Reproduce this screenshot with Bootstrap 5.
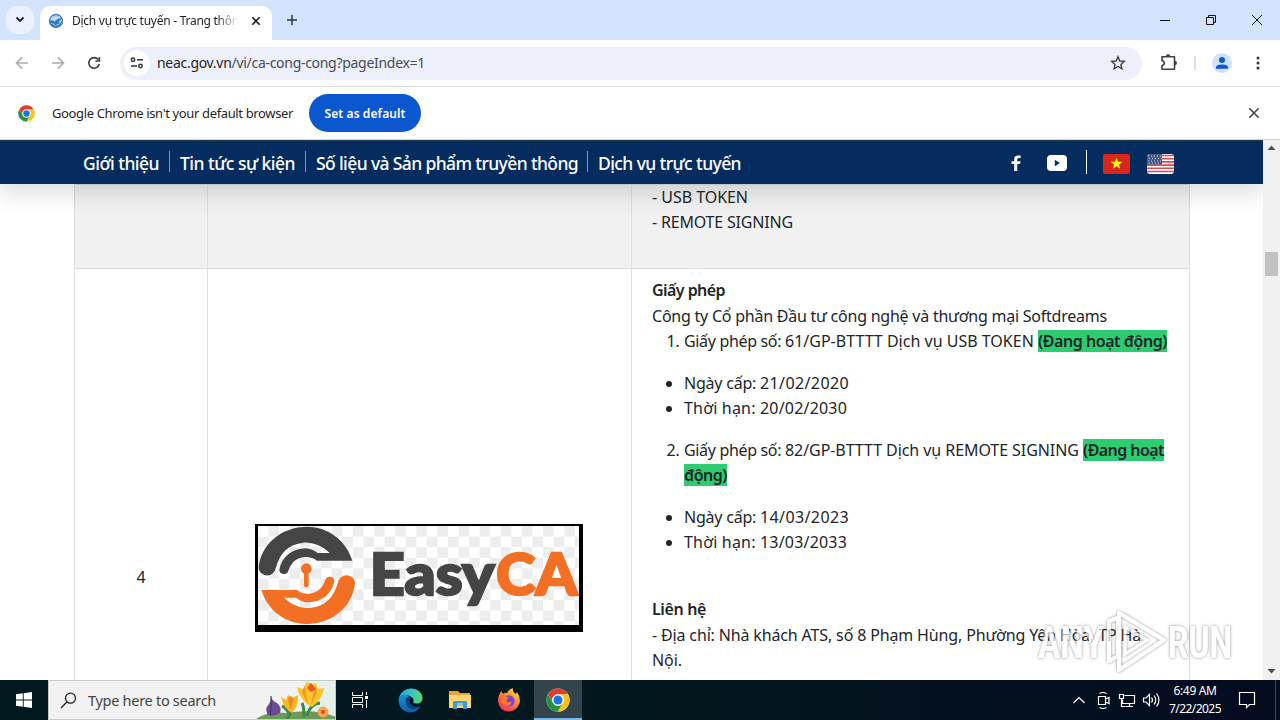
<!DOCTYPE html>
<html lang="vi">
<head>
  <meta charset="UTF-8" />
  <title>Dịch vụ trực tuyến</title>
  <link href="https://cdn.jsdelivr.net/npm/bootstrap@5.3.3/dist/css/bootstrap.min.css" rel="stylesheet">
  <style>
    body { width:1280px; height:720px; overflow:hidden; font-family:"Noto Sans","Open Sans",sans-serif; font-size:13px; color:#1f1f1f }
    svg { display:block; flex:none }
    [data-w] { white-space:nowrap }
    .tabstrip { height:40px; background:#d3e3fd; padding-left:6px }
    .tab-search { width:28px; height:28px; border-radius:10px; background:#e9f0fe; margin-top:-1px }
    .browser-tab { width:232px; height:34px; background:#fff; border-radius:10px 10px 0 0; margin:6px 0 0 6px; padding:0 8px 5px 8px }
    .tab-title { width:168px; font-size:12px; -webkit-mask-image:linear-gradient(90deg,#000 86%,transparent 99%) }
    .new-tab { margin-left:15px }
    .toolbar { height:46px }
    .address { width:1022px; height:33px; border-radius:17px; background:#edf0fa; margin-left:17px; padding:0 16px 0 4px }
    .site-info { width:26px; height:26px; border-radius:50%; background:#fff }
    .address-text { font-size:14px; margin-left:7px; padding-bottom:1px }
    .address-path { color:#474b52 }
    .infobar { height:54px; border-top:1px solid #dfe1e5; border-bottom:1px solid #c9d3e0; padding-left:18px }
    .infobar-text { margin-left:17px; padding-top:1px }
    .btn-default-browser { width:112px; height:38px; border-radius:19px; background:#0b57d0; color:#fff; font-size:12px; font-weight:600; margin-left:16px; padding:1px 0 0 }
    .btn-default-browser:hover { background:#0842a0; color:#fff }
    .page { height:540px }
    .site-nav { height:44px; background:#052c5e; border-top:1px solid #263a52; color:#fff; z-index:2; box-shadow:0 8px 24px rgba(0,0,0,.15); padding-left:83px }
    .site-nav a { color:#fff; text-decoration:none; font-size:17.5px; font-weight:500; line-height:22px }
    .nav-sep { width:1px; height:21px; background:#8297b2; margin:-3px 10px 0 }
    .site-nav .nav-sep:last-of-type { margin-left:9px }
    .ca-table { width:1116px; margin-left:74px; table-layout:fixed; font-size:16px; line-height:25.5px; color:#212529; border-color:#dee2e6 }
    .ca-table td { border:1px solid #dcdfe2; vertical-align:middle }
    .ca-table .info-cell { vertical-align:top; padding:9px 8px 0 20px }
    .row-prev { height:84px }
    .row-prev td { background:#f1f1f1 }
    .ca-table .row-prev .info-cell { padding-top:0; line-height:25px }
    .row-ca { height:618px }
    .ca-table ol, .ca-table ul { margin-bottom:16px; padding-left:32px }
    .active-mark { background:#2dcc70; font-weight:600 }
    .heading-bold { font-weight:600 }
    .ca-logo { margin-left:46px }
    .scroll-track { width:17px; background:#f1f1f1 }
    .scroll-thumb { width:13px; height:24px; background:#c1c1c1; margin-top:101px }
    .watermark { left:1030px; top:600px; z-index:3 }
    .taskbar { height:40px; background:linear-gradient(90deg,#021920,#03161e 55%,#04101f 80%,#030c20); color:#fff }
    .start-btn { width:48px }
    .search-box { width:288px; height:40px; background:#f2f2f2; border:1px solid #c8c8c8; padding-left:11px; font-size:14.5px; color:#444 }
    .search-text { margin-left:11px; padding-top:1px }
    .task-view { width:48px; height:40px; margin-right:2px }
    .task-app { width:49px; height:40px }
    .task-app-active { width:48px; margin-left:1px; background:#34444b; border-bottom:2px solid #76b9ed; padding-top:2px }
    .clock { width:58px; font-size:12px; line-height:18px }
  </style>
</head>
<body class="d-flex flex-column m-0">

<svg width="0" height="0" class="position-absolute">
  <symbol id="chromeLogo" viewBox="0 0 48 48">
    <circle cx="24" cy="24" r="23" fill="#fff"/>
    <path d="M4 12.5A23 23 0 0 1 44 12.5H24A11.5 11.5 0 0 0 14 29.7z" fill="#e33b2e"/>
    <path d="M4 12.5A23 23 0 0 0 24 47L34 29.7A11.5 11.5 0 0 1 14 29.7z" fill="#229342"/>
    <path d="M44 12.5A23 23 0 0 1 24 47L34 29.7A11.5 11.5 0 0 0 24 12.5z" fill="#fbc116"/>
    <circle cx="24" cy="24" r="11.5" fill="#fff"/>
    <circle cx="24" cy="24" r="9" fill="#1a73e8"/>
  </symbol>
</svg>

<!-- tabs -->
<div class="tabstrip d-flex align-items-center">
  <div class="tab-search d-flex align-items-center justify-content-center">
    <svg width="10" height="7" viewBox="0 0 10 7"><path d="M1.5 1.5L5 5l3.500-3.500" fill="none" stroke="#1f1f1f" stroke-width="1.800"/></svg>
  </div>
  <div class="browser-tab d-flex align-items-center">
    <svg width="16" height="16" viewBox="0 0 16 16">
      <circle cx="8" cy="8" r="6.500" fill="#c9dff1" stroke="#3b80bd" stroke-width="1.300"/>
      <path d="M1.500 8Q4 6.500 6.500 8.500Q9 5.500 14 4.500Q13 7.500 10 9.500Q13 9.500 14.500 8Q13 13 8 14.500Q2.500 14 1.500 8z" fill="#2f7bb8"/>
      <path d="M4 5.500Q8 2 12 3.500M3 10.500q4 0 5 3M8 12q3.500-.5 5-2.500" fill="none" stroke="#9cc6e4" stroke-width=".9"/>
    </svg>
    <div class="tab-title overflow-hidden ms-2"><span data-w="174">Dịch vụ trực tuyến - Trang thông</span></div>
    <svg class="ms-auto" width="16" height="16" viewBox="0 0 16 16"><path d="M4.300 4.300l7.400 7.400M11.700 4.300l-7.400 7.400" stroke="#1f1f1f" stroke-width="1.600"/></svg>
  </div>
  <svg class="new-tab" width="10" height="10" viewBox="0 0 10 10"><path d="M5 0v10M0 5h10" stroke="#303540" stroke-width="1.500"/></svg>
  <div class="ms-auto d-flex align-items-center">
    <svg width="120" height="40" viewBox="0 0 120 40" fill="none" stroke="#111">
      <path d="M0 20.500h10M46.500 17.500h7v7h-7zM48.500 17v-1.500h7v7h-1.500M92 15l10 10M102 15l-10 10"/>
    </svg>
  </div>
</div>

<!-- address bar -->
<div class="toolbar d-flex align-items-center">
  <svg width="103" height="46" viewBox="0 0 103 46" fill="none" stroke-width="1.600">
    <path d="M28 23H17M22 17.500L16.500 23l5.500 5.500M52 23h11M58 17.500l5.500 5.500-5.500 5.500" stroke="#a9abaf"/>
    <path d="M98.200 19.500A5.300 5.300 0 1 0 99.300 24M99.400 17v4h-4" stroke="#3c4043"/>
  </svg>
  <div class="address d-flex align-items-center">
    <div class="site-info d-flex align-items-center justify-content-center">
      <svg width="14" height="12" viewBox="0 0 14 12" fill="none" stroke="#303236" stroke-width="1.500"><circle cx="3" cy="2.800" r="1.700"/><circle cx="10.500" cy="9" r="1.700"/><path d="M7 2.800h6M1 9h6"/></svg>
    </div>
    <div class="address-text"><span data-w="268">neac.gov.vn<span class="address-path">/vi/ca-cong-cong?pageIndex=1</span></span></div>
    <svg class="ms-auto" width="16" height="16" viewBox="0 0 16 16"><path d="M8 1.800l1.800 4.200 4.500.4-3.400 3 1 4.500L8 11.500l-3.900 2.400 1-4.500-3.400-3 4.500-.4z" fill="none" stroke="#3c4043" stroke-width="1.400"/></svg>
  </div>
  <svg width="138" height="46" viewBox="1142 0 138 46">
    <path d="M1162 16.800h12.500v12.500h-12.500v-3.800q2.300-.3 2.300-2.400t-2.300-2.400z" fill="none" stroke="#3c4043" stroke-width="1.600" stroke-linejoin="round"/>
    <path d="M1165.800 16.500q0-2.300 2.300-2.300t2.300 2.300zM1174.500 20.800q2.500 0 2.500 2.300t-2.500 2.300z" fill="#3c4043"/>
    <path d="M1195 16v14" stroke="#c5d3ee" stroke-width="1.500"/>
    <circle cx="1222" cy="23" r="10" fill="#cfe0fc"/>
    <circle cx="1222" cy="20" r="3" fill="#0b57d0"/>
    <path d="M1216 28.800v-1.300q0-3 6-3t6 3v1.300z" fill="#0b57d0"/>
    <g fill="#303236"><circle cx="1258" cy="18" r="1.500"/><circle cx="1258" cy="23" r="1.500"/><circle cx="1258" cy="28" r="1.500"/></g>
  </svg>
</div>

<!-- default browser bar -->
<div class="infobar d-flex align-items-center">
  <svg width="17" height="17"><use href="#chromeLogo"/></svg>
  <div class="infobar-text"><span data-w="241">Google Chrome isn't your default browser</span></div>
  <button class="btn btn-default-browser"><span data-w="81">Set as default</span></button>
  <svg class="ms-auto me-3" width="20" height="20" viewBox="0 0 20 20"><path d="M5.300 5.300l9.400 9.400M14.700 5.300l-9.400 9.400" stroke="#444746" stroke-width="1.600"/></svg>
</div>

<div class="page d-flex">
  <div class="flex-grow-1 overflow-hidden bg-white">
    <nav class="site-nav position-relative d-flex align-items-center">
      <a href="#"><span data-w="76">Giới thiệu</span></a><div class="nav-sep"></div>
      <a href="#"><span data-w="115">Tin tức sự kiện</span></a><div class="nav-sep"></div>
      <a href="#"><span data-w="262">Số liệu và Sản phẩm truyền thông</span></a><div class="nav-sep"></div>
      <a href="#"><span data-w="143">Dịch vụ trực tuyến</span></a>
      <svg class="ms-auto" width="263" height="43" viewBox="1000 141 263 43">
        <path d="M1014.200 171v-7h-2.700v-2.800h2.700v-2.200q0-3.600 3.700-3.600h2.800v2.700h-1.800q-1.700 0-1.700 1.500v1.600h3.400l-.5 2.800h-2.900v7z" fill="#fff"/>
        <rect x="1047" y="155" width="20" height="16" rx="4" fill="#fff"/><path d="M1054.800 159.700l5 3.300-5 3.300z" fill="#052c5e"/>
        <path d="M1086.500 150v24" stroke="#fff"/>
        <rect x="1103" y="154" width="27" height="20" rx="2" fill="#da251d"/>
        <path d="M1116.500 157.500l1.500 4.300h4.500l-3.600 2.700 1.300 4.300-3.700-2.600-3.700 2.600 1.300-4.300-3.600-2.700h4.500z" fill="#ffff00"/>
        <clipPath id="usClip"><rect x="1147" y="154" width="27" height="20" rx="3"/></clipPath>
        <g clip-path="url(#usClip)"><rect x="1147" y="154" width="27" height="20" fill="#fff"/>
          <path d="M1147 155.500h27M1147 158.700h27M1147 161.900h27M1147 165.100h27M1147 168.300h27M1147 171.500h27" stroke="#d94a55" stroke-width="1.600"/>
          <rect x="1147" y="154" width="15" height="10.500" fill="#4a5a86"/>
          <path d="M1148 156h13M1149 158.500h13M1148 161h13M1149 163h12" stroke="#c0c9dd" stroke-dasharray="1 2"/></g>
      </svg>
    </nav>

    <table class="ca-table">
      <colgroup><col style="width:133px"><col style="width:424px"><col></colgroup>
      <tr class="row-prev">
        <td></td><td></td>
        <td class="info-cell"><span data-w="96">- USB TOKEN</span><br><span data-w="141">- REMOTE SIGNING</span></td>
      </tr>
      <tr class="row-ca">
        <td class="text-center">4</td>
        <td>
          <svg class="ca-logo" width="328" height="108" viewBox="30 24 984 324">
            <defs>
              <pattern id="checks" x="70" y="30" width="63.400" height="63.400" patternUnits="userSpaceOnUse">
                <path d="M0 0h31.700v31.700H0zM31.700 31.700h31.700v31.700H31.700z" fill="#ededed"/>
              </pattern>
              <g id="swirl">
                <path d="M41 158C45 85 110 32 187 32C250 32 305 75 322 134H216Q200 122 180 123C152 125 137 142 130 165A14 14 0 0 1 103 161C110 122 142 98 180 97Q200 97 218 111H254C230 88 200 78 175 80C130 85 105 110 92 157A26 26 0 0 1 41 158z"/>
              </g>
            </defs>
            <rect x="30" y="24" width="984" height="324"/>
            <rect x="39" y="30" width="963" height="297" fill="#fff"/>
            <rect x="39" y="30" width="963" height="297" fill="url(#checks)"/>
            <use href="#swirl" fill="#454545"/>
            <use href="#swirl" fill="#f26f24" transform="rotate(180 185.500 178)"/>
            <path d="M184 158v49" stroke="#f26f24" stroke-width="14" stroke-linecap="round"/>
            <circle cx="184" cy="158" r="16" fill="#f26f24"/>
            <g font-family="Lato, sans-serif" font-weight="900" font-size="172" stroke-width="7">
              <text x="374" y="236" textLength="374" lengthAdjust="spacingAndGlyphs" fill="#454545" stroke="#454545">Easy</text>
              <text x="753" y="236" textLength="244" lengthAdjust="spacingAndGlyphs" fill="#f26f24" stroke="#f26f24">CA</text>
            </g>
          </svg>
        </td>
        <td class="info-cell">
          <div class="heading-bold"><span data-w="73">Giấy phép</span></div>
          <div><span data-w="455">Công ty Cổ phần Đầu tư công nghệ và thương mại Softdreams</span></div>
          <ol><li><span data-w="101">Giấy phép số:&nbsp;</span><span data-w="253">61/GP-BTTTT Dịch vụ USB TOKEN&nbsp;</span><span class="active-mark" data-w="129">(Đang hoạt động)</span></li></ol>
          <ul>
            <li><span data-w="76">Ngày cấp:&nbsp;</span><span data-w="89">21/02/2020</span></li>
            <li><span data-w="163">Thời hạn: 20/02/2030</span></li>
          </ul>
          <ol start="2"><li><span data-w="101">Giấy phép số:&nbsp;</span><span data-w="298">82/GP-BTTTT Dịch vụ REMOTE SIGNING&nbsp;</span><span class="active-mark" data-w="81">(Đang hoạt</span><br><span class="active-mark" data-w="43">động)</span></li></ol>
          <ul>
            <li><span data-w="76">Ngày cấp:&nbsp;</span><span data-w="89">14/03/2023</span></li>
            <li><span data-w="163">Thời hạn: 13/03/2033</span></li>
          </ul>
          <br>
          <div class="heading-bold"><span data-w="54">Liên hệ</span></div>
          <div><span data-w="489">- Địa chỉ: Nhà khách ATS, số 8 Phạm Hùng, Phường Yên Hòa, TP Hà</span><br><span data-w="30">Nội.</span><br>- Điện thoại:</div>
        </td>
      </tr>
    </table>
  </div>
  <div class="scroll-track d-flex flex-column align-items-center">
    <svg width="9" height="11" viewBox="0 0 9 11"><path d="M0.500 10L4.500 5.500 8.500 10z" fill="#505050"/></svg>
    <div class="scroll-thumb"></div>
    <svg class="mt-auto mb-1" width="9" height="9" viewBox="0 0 9 9"><path d="M0.500 2L4.500 6.500 8.500 2z" fill="#505050"/></svg>
  </div>
</div>

<!-- taskbar -->
<div class="taskbar d-flex align-items-center">
  <div class="start-btn d-flex justify-content-center">
    <svg width="16" height="16" viewBox="0 0 16 16"><path d="M0 2.300L6.800 1.300V7.500H0zM7.700 1.200L16 0v7.500H7.700zM0 8.400h6.800v6.300L0 13.700zM7.700 8.400H16V16l-8.300-1.200z" fill="#fff"/></svg>
  </div>
  <div class="search-box d-flex align-items-center">
    <svg width="17" height="17" viewBox="0 0 17 17"><path d="M1 16l5.800-6" stroke="#222" stroke-width="1.300"/><circle cx="10.500" cy="6.200" r="5" fill="none" stroke="#222" stroke-width="1.300"/></svg>
    <div class="search-text"><span data-w="128">Type here to search</span></div>
    <svg class="ms-auto" width="79" height="38" viewBox="256 681 79 38">
      <path d="M303 681h32v38h-32z" fill="#e6f0ea"/>
      <path d="M256 719q12-8 30-6q28-5 50 4v2z" fill="#6c9a58"/>
      <path d="M287 719q8-12 2-14M304 717q0-10-2-14M307 716q3-12 13-13M290 716q-3-8-8-10" fill="none" stroke="#3d8a44" stroke-width="3"/>
      <path d="M271 696q0 4 6 7q5 4 3 10q-7 4-12 2q-4-6 1-11q2-3 2-8z" fill="#6a4a91"/>
      <path d="M271 696q1 9-1 19" fill="none" stroke="#463067"/>
      <path d="M281 697l5 3 2-5 4 3 6-3q1 11-6 18q-8-4-11-16z" fill="#f9b821"/>
      <path d="M288 698l2 13 4-12-3-3z" fill="#ee8a20"/>
      <path d="M297 687l6 2 4-7 5 2 4-1 2 6 6-1q-2 12-12 19q-12-6-15-20z" fill="#fcc42c"/>
      <path d="M305 686l3 19-6-13zM315 685l2 7-6 13z" fill="#f39a1e"/>
      <path d="M307 688l4-5 5 6-5 3z" fill="#e65b1d"/>
      <circle cx="323" cy="712" r="5.500" fill="#f8a44b"/><circle cx="323" cy="712" r="2" fill="#ce4b20"/>
    </svg>
  </div>
  <div class="task-view d-flex align-items-center justify-content-center">
    <svg width="18" height="16" viewBox="0 0 18 16" fill="none" stroke="#fff"><path d="M1.500 0v3.500h10V0M1.500 16v-3.500h10V16M1.500 5.500h10v5h-10zM15.500 0v3M15.500 8v8"/><path d="M14 4h3v3h-3z" fill="#fff" stroke="none"/></svg>
  </div>
  <div class="task-app d-flex align-items-center justify-content-center">
    <svg width="25" height="25" viewBox="0 0 24 24">
      <defs>
        <linearGradient id="edgeTop"><stop stop-color="#2aa8e0"/><stop offset=".6" stop-color="#35c8bd"/><stop offset="1" stop-color="#68d65b"/></linearGradient>
        <linearGradient id="edgeLow" x2="0" y2="1"><stop stop-color="#1795d8"/><stop offset="1" stop-color="#125ba5"/></linearGradient>
      </defs>
      <path d="M0.500 11C2 4 7 .5 12.500.5C20 .5 24 6 23.500 10.500C23 15 17 16 14.500 14Q16 11 13.500 9C8 5 2 7 .5 11z" fill="url(#edgeTop)"/>
      <path d="M.5 11C3 6 8 6 11 8Q7 9 7.500 14Q9 21 18 19.500L21.500 17.500Q18 23.500 12 23.500Q1 23 .5 11z" fill="url(#edgeLow)"/>
      <path d="M11 8Q7 10 7.800 15Q9.500 21 17 20Q21 19 21.500 17.500Q16 19 13 16Q10 13 12 9z" fill="#123f85"/>
    </svg>
  </div>
  <div class="task-app d-flex align-items-center justify-content-center">
    <svg width="22" height="20" viewBox="0 0 22 20">
      <path d="M0 1h9l2 2h10v15H0z" fill="#e8a33b"/><path d="M0 5h22v13H0z" fill="#ffd86b"/>
      <path d="M4 19v-7q0-1 1-1h12q1 0 1 1v7h-4v-3H8v3z" fill="#3f9bd8"/><path d="M8 13h6v3H8z" fill="#8cc7ea"/>
    </svg>
  </div>
  <div class="task-app d-flex align-items-center justify-content-center">
    <svg width="24" height="24" viewBox="0 0 24 24">
      <defs><linearGradient id="fox" x1=".9" y1="0" x2=".2" y2="1"><stop stop-color="#fff04a"/><stop offset=".45" stop-color="#ff8a28"/><stop offset="1" stop-color="#f6285b"/></linearGradient></defs>
      <path d="M1 13Q1 7 4.500 3l1.500 3Q8 4 10 5Q12 1 16 0Q15 4 19 6L20 4Q24 10 22.500 15Q20 23 12 23.500Q2 23 1 13z" fill="url(#fox)"/>
      <circle cx="12" cy="13" r="5.700" fill="#7a42d8"/><path d="M4 9q5-2 8 1-4 1-2 4 3 1 5-1-1 5-6 5-5-1-5-9z" fill="#ff7a2a"/>
    </svg>
  </div>
  <div class="task-app task-app-active d-flex align-items-center justify-content-center">
    <svg width="24" height="24"><use href="#chromeLogo"/></svg>
  </div>
  <svg class="ms-auto" width="98" height="40" viewBox="1068 680 98 40" fill="none" stroke="#fff" stroke-width="1.200">
    <path d="M1073.500 703l5.500-5.500 5.500 5.500"/>
    <path d="M1098.500 696.500h7v8h-7zM1105.500 699l3.500-1.500v6l-3.500-1.500M1099.500 693.500q3.500-2 7 0M1099.500 707.500q3.500 2 7 0"/>
    <path d="M1124.500 695.500h10v8h-12v-4M1119.500 694.500h4v4h-4zM1121.500 698.500v8h4M1129.500 703.500v3M1126 706.500h7"/>
    <path d="M1143.500 698h2.500l3.500-3.500v11L1146 702h-2.500zM1151.500 697.500q2 2.500 0 5M1154 695.500q3.500 4.500 0 9M1156.500 693.500q5 6.500 0 13"/>
  </svg>
  <div class="clock text-center"><span data-w="43">6:49 AM</span><br><span data-w="52">7/22/2025</span></div>
  <svg width="56" height="40" viewBox="1224 680 56 40" fill="none" stroke="#fff" stroke-width="1.200"><path d="M1239.500 692.500h15v12h-5l-3 3v-3h-7z"/><path d="M1275.500 680v40" stroke="#3a4554"/></svg>
</div>

<svg class="watermark position-absolute" width="210" height="80" viewBox="1030 600 210 80">
  <defs><filter id="wmShadow"><feDropShadow dx="0" dy="0" stdDeviation="1.800" flood-color="#444" flood-opacity=".9"/></filter></defs>
  <g filter="url(#wmShadow)" opacity=".7" fill="#fff">
    <g font-family="Roboto, sans-serif" font-size="45" font-weight="700">
      <text x="1038" y="658" textLength="66" lengthAdjust="spacingAndGlyphs">ANY</text>
      <text x="1168" y="658" textLength="64" lengthAdjust="spacingAndGlyphs">RUN</text>
    </g>
    <path d="M1109 621l9-3v38l-9 5zM1119 613l45 27-45 30z" fill="none" stroke="#fff" stroke-width="4" stroke-linejoin="round"/>
    <path d="M1125 627l22 13-22 14z" fill="none" stroke="#fff" stroke-width="3"/>
  </g>
</svg>

<script src="https://cdn.jsdelivr.net/npm/bootstrap@5.3.3/dist/js/bootstrap.bundle.min.js"></script>
<script>
// track each text run to its data-w width
document.querySelectorAll('[data-w]').forEach(el=>{
  const diff = Number(el.dataset.w) - el.getBoundingClientRect().width;
  el.style.letterSpacing = (diff / el.textContent.length) + 'px';
});
</script>
</body>
</html>
